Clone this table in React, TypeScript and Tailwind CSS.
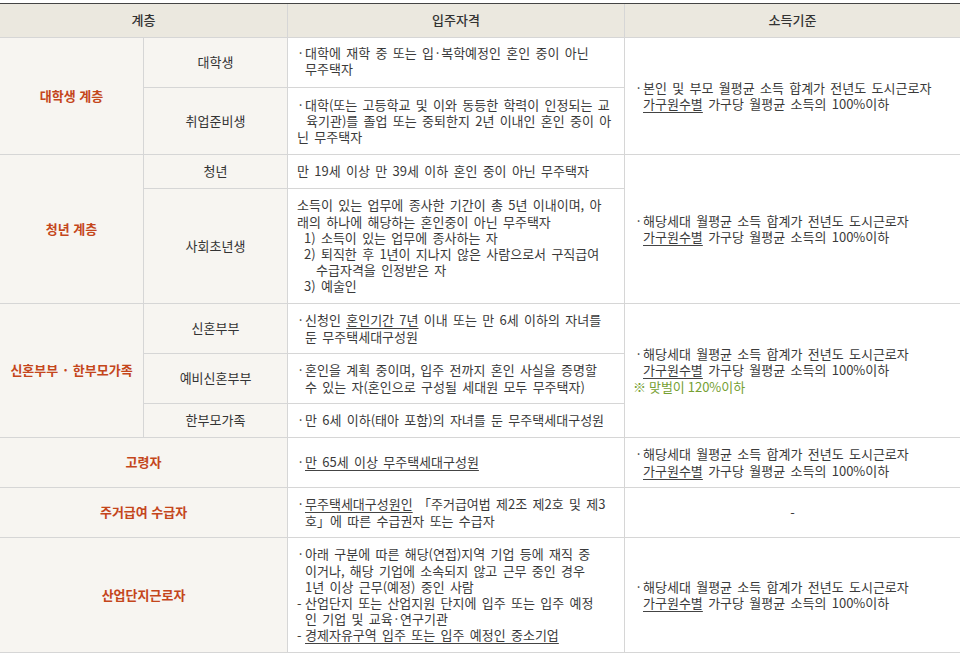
import React from "react";

const U = ({ children }: { children: React.ReactNode }) => (
  <span className="underline underline-offset-[3px] decoration-[#444]">{children}</span>
);

// one line with a leading mark (· or -) and hanging text
const B = ({ m = "·", children }: { m?: string; children: React.ReactNode }) => (
  <div className="flex whitespace-nowrap">
    <span className="w-[8px] shrink-0">{m}</span>
    <span>{children}</span>
  </div>
);

const C = ({ children, pl = "pl-[8px]" }: { children: React.ReactNode; pl?: string }) => (
  <div className={`whitespace-nowrap ${pl}`}>{children}</div>
);

const Income = () => (
  <>
    <B>해당세대 월평균 소득 합계가 전년도 도시근로자</B>
    <C>
      <U>가구원수별</U> 가구당 월평균 소득의 100%이하
    </C>
  </>
);

const th = "bg-[#ebe8df] border-b border-[#d6d6d6] font-medium text-[#333] text-center align-middle";
const grp = "bg-[#f7f5f1] border-b border-r border-[#d6d6d6] text-center align-middle font-bold text-[#c4461b] [word-spacing:0.5px]";
const sub = "bg-[#f7f5f1] border-b border-r border-[#d6d6d6] text-center align-middle text-[#333]";
const qual = "border-b border-r border-[#d6d6d6] align-middle pl-[9px] pr-2 [word-spacing:2.4px]";
const inc = "border-b border-[#d6d6d6] align-middle pl-[10px] pr-2 [word-spacing:2.4px]";

export default function App() {
  return (
    <div className="w-[967px] min-h-[657px] bg-white font-['Noto_Sans_CJK_KR','Noto_Sans',sans-serif] text-[13px] leading-[16.2px] text-[#3a3a3a]">
      <table className="mt-[3px] w-[960px] table-fixed border-separate border-spacing-0 border-t border-[#444]">
        <colgroup>
          <col className="w-[144px]" />
          <col className="w-[144px]" />
          <col className="w-[337px]" />
          <col className="w-[335px]" />
        </colgroup>
        <thead>
          <tr className="h-[34px]">
            <th colSpan={2} className={`${th} border-r`}>계층</th>
            <th className={`${th} border-r`}>입주자격</th>
            <th className={th}>소득기준</th>
          </tr>
        </thead>
        <tbody>
          <tr className="h-[50px]">
            <td rowSpan={2} className={grp}>대학생 계층</td>
            <td className={sub}>대학생</td>
            <td className={`${qual} pb-[3px]`}>
              <B>대학에 재학 중 또는 입·복학예정인 혼인 중이 아닌</B>
              <C>무주택자</C>
            </td>
            <td rowSpan={2} className={inc}>
              <B>본인 및 부모 월평균 소득 합계가 전년도 도시근로자</B>
              <C>
                <U>가구원수별</U> 가구당 월평균 소득의 100%이하
              </C>
            </td>
          </tr>
          <tr className="h-[67px]">
            <td className={sub}>취업준비생</td>
            <td className={qual}>
              <B>대학(또는 고등학교 및 이와 동등한 학력이 인정되는 교</B>
              <C pl="pl-[9px]">육기관)를 졸업 또는 중퇴한지 2년 이내인 혼인 중이 아</C>
              <C pl="pl-0">닌 무주택자</C>
            </td>
          </tr>

          <tr className="h-[34px]">
            <td rowSpan={2} className={grp}>청년 계층</td>
            <td className={sub}>청년</td>
            <td className={qual}>
              <C pl="pl-0">만 19세 이상 만 39세 이하 혼인 중이 아닌 무주택자</C>
            </td>
            <td rowSpan={2} className={inc}>
              <Income />
            </td>
          </tr>
          <tr className="h-[115px]">
            <td className={sub}>사회초년생</td>
            <td className={qual}>
              <C pl="pl-0">소득이 있는 업무에 종사한 기간이 총 5년 이내이며, 아</C>
              <C pl="pl-0">래의 하나에 해당하는 혼인중이 아닌 무주택자</C>
              <C pl="pl-[7px]">1) 소득이 있는 업무에 종사하는 자</C>
              <C pl="pl-[7px]">2) 퇴직한 후 1년이 지나지 않은 사람으로서 구직급여</C>
              <C pl="pl-[19px]">수급자격을 인정받은 자</C>
              <C pl="pl-[7px]">3) 예술인</C>
            </td>
          </tr>

          <tr className="h-[50px]">
            <td rowSpan={3} className={grp}>신혼부부 · 한부모가족</td>
            <td className={sub}>신혼부부</td>
            <td className={qual}>
              <B>
                신청인 <U>혼인기간 7년</U> 이내 또는 만 6세 이하의 자녀를
              </B>
              <C>둔 무주택세대구성원</C>
            </td>
            <td rowSpan={3} className={inc}>
              <Income />
              <div className="whitespace-nowrap -ml-[2px] mt-[1px] text-[#76a033] [word-spacing:0px]">※ 맞벌이 120%이하</div>
            </td>
          </tr>
          <tr className="h-[50px]">
            <td className={sub}>예비신혼부부</td>
            <td className={qual}>
              <B>혼인을 계획 중이며, 입주 전까지 혼인 사실을 증명할</B>
              <C>수 있는 자(혼인으로 구성될 세대원 모두 무주택자)</C>
            </td>
          </tr>
          <tr className="h-[34px]">
            <td className={sub}>한부모가족</td>
            <td className={qual}>
              <B>만 6세 이하(태아 포함)의 자녀를 둔 무주택세대구성원</B>
            </td>
          </tr>

          <tr className="h-[50px]">
            <td colSpan={2} className={grp}>고령자</td>
            <td className={qual}>
              <B>
                <U>만 65세 이상 무주택세대구성원</U>
              </B>
            </td>
            <td className={inc}>
              <Income />
            </td>
          </tr>

          <tr className="h-[50px]">
            <td colSpan={2} className={grp}>주거급여 수급자</td>
            <td className={qual}>
              <B>
                <U>무주택세대구성원인</U> 「주거급여법 제2조 제2호 및 제3
              </B>
              <C>호」에 따른 수급권자 또는 수급자</C>
            </td>
            <td className={`${inc} text-center !pl-0 !pr-0`}>-</td>
          </tr>

          <tr className="h-[115px]">
            <td colSpan={2} className={grp}>산업단지근로자</td>
            <td className={qual}>
              <B>아래 구분에 따른 해당(연접)지역 기업 등에 재직 중</B>
              <C>이거나, 해당 기업에 소속되지 않고 근무 중인 경우</C>
              <C>1년 이상 근무(예정) 중인 사람</C>
              <B m="-">산업단지 또는 산업지원 단지에 입주 또는 입주 예정</B>
              <C>인 기업 및 교육·연구기관</C>
              <B m="-">
                <U>경제자유구역 입주 또는 입주 예정인 중소기업</U>
              </B>
            </td>
            <td className={inc}>
              <Income />
            </td>
          </tr>
        </tbody>
      </table>
    </div>
  );
}
